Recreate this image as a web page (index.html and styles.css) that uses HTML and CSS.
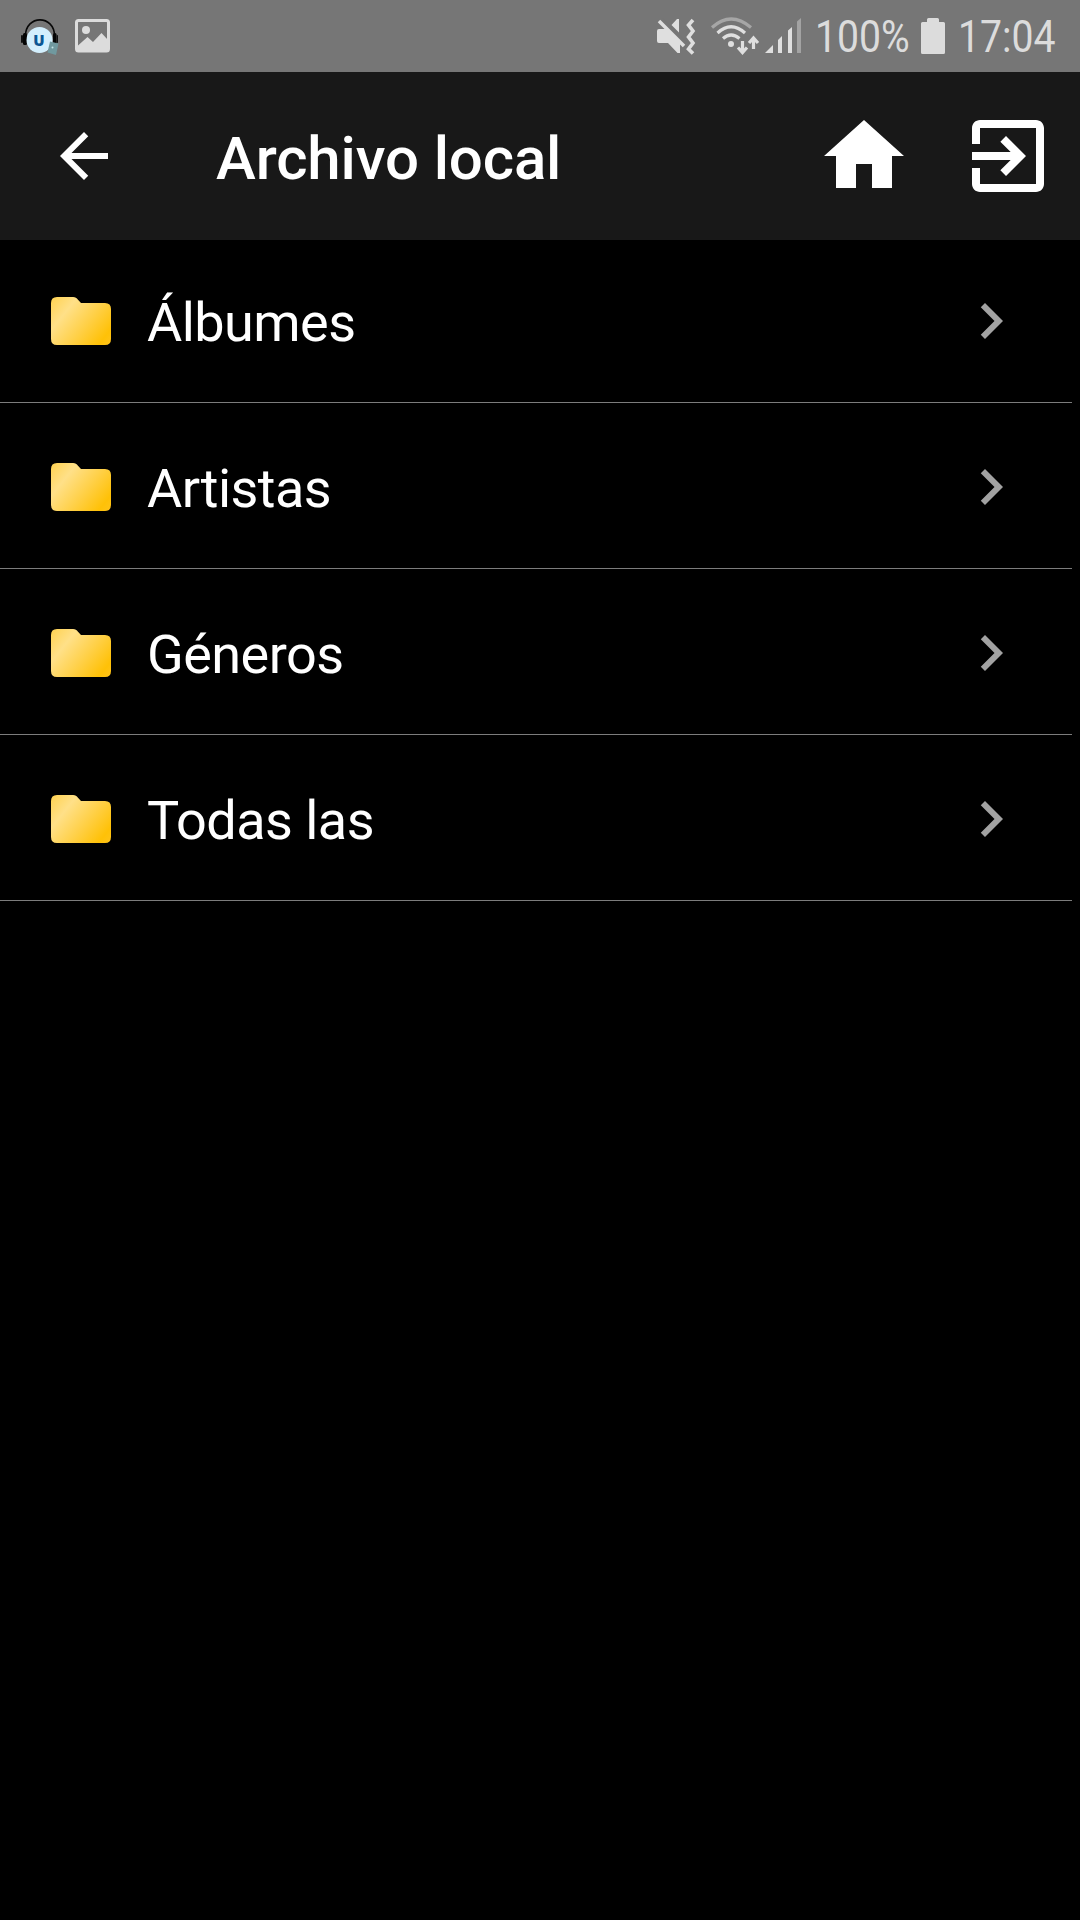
FILE: index.html
```html
<!DOCTYPE html>
<html lang="es">
<head>
<meta charset="utf-8">
<title>Archivo local</title>
<link rel="stylesheet" href="styles.css">
</head>
<body>
<svg class="defs" width="0" height="0" aria-hidden="true">
  <defs>
    <linearGradient id="gold" x1="0" y1="0" x2="60" y2="48" gradientUnits="userSpaceOnUse">
      <stop offset="0" stop-color="#ffd250"/>
      <stop offset=".27" stop-color="#ffe088"/>
      <stop offset=".58" stop-color="#ffd047"/>
      <stop offset=".87" stop-color="#ffc107"/>
      <stop offset="1" stop-color="#ffc31a"/>
    </linearGradient>
    <symbol id="folder" viewBox="0 0 60 48">
      <path fill="url(#gold)" d="M6 0H22C24.500 0 25.500 1 27 2.700L30 6H54Q60 6 60 12V42Q60 48 54 48H6Q0 48 0 42V6Q0 0 6 0Z"/>
    </symbol>
    <symbol id="chevron" viewBox="0 0 24 24">
      <path fill="#a2a2a2" d="M10 6L8.590 7.410 13.170 12l-4.580 4.590L10 18l6-6z"/>
    </symbol>
  </defs>
</svg>

<div class="status">
  <svg class="app" width="40" height="40" viewBox="0 0 40 40">
    <path d="M5.500 17C5.500-4.500 34.500-4.500 34.500 17" fill="none" stroke="#080808" stroke-width="1.600"/>
    <rect x="1" y="16" width="2" height="8" rx="1" fill="#111"/>
    <rect x="3" y="14" width="4" height="12" rx="1.500" fill="#050505"/>
    <rect x="33" y="14" width="3.500" height="12" rx="1.500" fill="#050505"/>
    <rect x="36.500" y="16" width="1.500" height="8" rx=".7" fill="#111"/>
    <circle cx="19.500" cy="21" r="13" fill="#d3effd"/>
    <text class="app-letter" x="19" y="27" text-anchor="middle">U</text>
    <path d="M30 22.500L38.500 24.500 36 36 27.500 33.500Z" fill="#70999f"/>
    <circle cx="32.500" cy="28.500" r="1" fill="#c5e5e8"/>
  </svg>
  <svg class="picture" width="36" height="34" viewBox="0 0 36 34">
    <rect x="1.500" y="1.500" width="32" height="30.500" rx="2" fill="none" stroke="#dcdcdc" stroke-width="3"/>
    <circle cx="11" cy="11" r="4" fill="#dcdcdc"/>
    <path d="M3 26.500L12.500 18 18 23 26.500 14 33 21V32H3Z" fill="#dcdcdc"/>
  </svg>
  <svg class="mute" width="40" height="38" viewBox="0 0 40 38">
    <path d="M3 12H10L24 26V36H21.500L12 26H3Q1 26 1 24V14Q1 12 3 12ZM15.500 8L21 2H23V15.500Z" fill="#dfdfdf"/>
    <path d="M5.500 2L30 26.500" stroke="#767676" stroke-width="3"/>
    <path d="M3 4L28 29" stroke="#dfdfdf" stroke-width="3.600"/>
    <path d="M37 3L32.500 8 37 14 32.500 20 37 26 32.500 32 37 36.500" fill="none" stroke="#dfdfdf" stroke-width="3.600"/>
  </svg>
  <svg class="wifi" width="50" height="38" viewBox="0 0 50 38">
    <g fill="none" stroke="#dfdfdf" stroke-width="3.200">
      <path d="M2 10.500Q21-6.500 41 10.500" stroke="#a6a6a6"/>
      <path d="M7.500 16Q21 3.500 35 16M13 21.500Q21 14.500 29.500 21.500"/>
      <path d="M32.500 24V35M28 30.500L32.500 35.500 37 30.500M43.500 32V22M39 26L43.500 21 48 26"/>
    </g>
    <circle cx="21" cy="27" r="3" fill="#dfdfdf"/>
  </svg>
  <svg class="signal" width="38" height="38" viewBox="0 0 38 38">
    <path d="M0 36L8 28V36ZM13 23L17 19V36H13ZM23 13.500L27 10V36H23Z" fill="#dfdfdf"/>
    <path d="M32 4.500L36 1V36H32Z" fill="#a3a3a3"/>
  </svg>
  <span class="percent"><span class="narrow">100%</span></span>
  <svg class="battery" width="24" height="36" viewBox="0 0 24 36">
    <path d="M6 4V1.500Q6 0 7.500 0H16.500Q18 0 18 1.500V4H22.500Q24 4 24 5.500V34.500Q24 36 22.500 36H1.500Q0 36 0 34.500V5.500Q0 4 1.500 4Z" fill="#dcdcdc"/>
  </svg>
  <span class="clock"><span class="narrow">17:04</span></span>
</div>

<header class="bar">
  <svg width="72" height="72" viewBox="0 0 24 24"><path fill="#fff" d="M20 11H7.830l5.590-5.590L12 4l-8 8 8 8 1.410-1.410L7.830 13H20z"/></svg>
  <h1 class="title">Archivo local</h1>
  <svg width="96" height="96" viewBox="0 0 24 24"><path fill="#fff" d="M10 20v-6h4v6h5v-8h3L12 3 2 12h3v8z"/></svg>
  <svg class="exit" width="96" height="96" viewBox="0 0 24 24"><path fill="#fff" d="M10.090 15.590L11.500 17l5-5-5-5-1.410 1.410L12.670 11H3v2h9.670l-2.580 2.590zM19 3H5c-1.110 0-2 .9-2 2v4h2V5h14v14H5v-4H3v4c0 1.100.89 2 2 2h14c1.100 0 2-.9 2-2V5c0-1.100-.9-2-2-2z"/></svg>
</header>

<ul class="list">
  <li class="row"><svg width="60" height="48"><use href="#folder"/></svg><span class="label">Álbumes</span><svg width="72" height="72"><use href="#chevron"/></svg></li>
  <li class="row"><svg width="60" height="48"><use href="#folder"/></svg><span class="label">Artistas</span><svg width="72" height="72"><use href="#chevron"/></svg></li>
  <li class="row"><svg width="60" height="48"><use href="#folder"/></svg><span class="label">Géneros</span><svg width="72" height="72"><use href="#chevron"/></svg></li>
  <li class="row"><svg width="60" height="48"><use href="#folder"/></svg><span class="label">Todas las</span><svg width="72" height="72"><use href="#chevron"/></svg></li>
</ul>
</body>
</html>
```

FILE: styles.css
```css
* { box-sizing: border-box; }

body {
  margin: 0;
  min-height: 1920px;
  background: #000;
  color: #fff;
  font-family: Roboto, "Noto Sans", sans-serif;
}

svg { display: block; flex: none; }
.defs { position: absolute; }

.status {
  display: flex;
  align-items: flex-start;
  height: 72px;
  padding: 0 24px 0 20px;
  background: #767676;
  color: #dcdcdc;
}

.app { margin-top: 19px; }
.app-letter { font: 800 15px "Open Sans", sans-serif; fill: #0b5794; }
.picture { margin: 19px auto 0 15px; }
.mute { margin: 17px 14px 0 0; }
.wifi { margin: 17px 5px 0 0; }
.signal { margin: 17px 12px 0 0; }
.battery { margin: 18px 13px 0 0; }

.percent,
.clock {
  font-size: 45px;
  line-height: 72px;
  white-space: nowrap;
  height: 72px;
  padding-top: 1px;
}
.percent { width: 106px; }
.clock { width: 98px; }
.narrow {
  display: inline-block;
  transform: scaleX(.87);
  transform-origin: left;
}

.bar {
  display: flex;
  align-items: center;
  height: 168px;
  padding: 0 24px 0 48px;
  background: #181818;
}

.title {
  flex: 1;
  margin: 0 0 0 96px;
  padding-top: 6px;
  font-size: 60px;
  font-weight: 500;
  line-height: 72px;
  letter-spacing: -.13px;
}

.exit { margin-left: 48px; }

.list {
  margin: -3px 8px 0 0;
  padding: 0;
  list-style: none;
}

.row {
  display: flex;
  align-items: center;
  height: 166px;
  padding: 2px 45px 0 51px;
  border-bottom: 1px solid #7c7c7c;
}

.label {
  flex: 1;
  margin-left: 36px;
  padding-top: 4px;
  font-size: 54px;
  line-height: 64px;
  letter-spacing: -.54px;
}
```
